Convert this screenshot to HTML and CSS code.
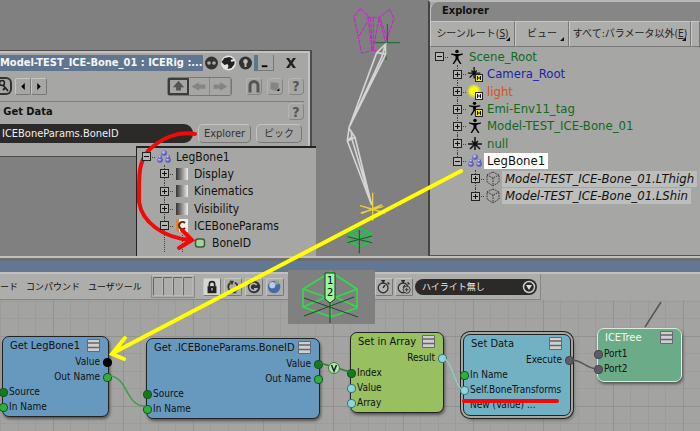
FILE: index.html
```html
<!DOCTYPE html>
<html lang="ja">
<head>
<meta charset="utf-8">
<title>ICE Tree</title>
<link rel="stylesheet" href="styles.css">
</head>
<body>
<svg class="defs" aria-hidden="true">
  <defs>
    <linearGradient id="fade"><stop offset="0" stop-color="#333"/><stop offset="1" stop-color="#eee"/></linearGradient>
    <radialGradient id="ball" cx=".4" cy=".35"><stop offset="0" stop-color="#d5d5ff"/><stop offset="1" stop-color="#5452b4"/></radialGradient>
    <radialGradient id="sun"><stop offset=".5" stop-color="#ff0"/><stop offset="1" stop-color="#ff0" stop-opacity=".1"/></radialGradient>
    <symbol id="i-model" viewBox="0 0 16 16"><circle cx="8" cy="2.500" r="1.800"/><path d="M2 4.500l4 .500h4l4-.500v1L9.500 7v3l3 5h-1.500L8 10.500 5 15H3.500l3-5V7L2 5.500z"/></symbol>
    <symbol id="i-null" viewBox="0 0 16 16"><path d="M8 1v13M1 8h14M3 13l5-5 5 5M5 5l3 3 3-3" fill="none" stroke="#111" stroke-width="1.500"/></symbol>
    <symbol id="i-tag" viewBox="0 0 8 8"><rect x=".5" y=".5" width="7" height="7" fill="currentColor" stroke="#222"/><path d="M2.500 2v4M5.500 2v4M2.500 4h3" stroke="#111" fill="none"/></symbol>
    <symbol id="i-cloud" viewBox="0 0 16 16"><g fill="url(#ball)"><circle cx="8" cy="4" r="2.800"/><circle cx="4" cy="11" r="2.800"/><circle cx="12" cy="11" r="2.800"/><circle cx="4" cy="8" r="2"/><circle cx="12" cy="8" r="2"/></g></symbol>
    <symbol id="i-cube" viewBox="0 0 16 16"><path d="M8 1l6 3v7l-6 4-6-4V4zM2 4l6 3 6-3M8 7v8" fill="none" stroke="#333" stroke-dasharray="1.500 1"/></symbol>
    <symbol id="i-prop" viewBox="0 0 16 16"><path fill="url(#fade)" d="M2 2h12v12H2z"/></symbol>
    <symbol id="i-custom" viewBox="0 0 16 16"><path fill="#f5ede6" d="M2 1h12v13H2z"/><path fill="#e0863c" d="M2 1h3v13H2z"/><path d="M11 5a3.500 3.500 0 1 0 0 5" fill="none" stroke="#5a2a10" stroke-width="2"/></symbol>
    <symbol id="i-param" viewBox="0 0 16 16"><rect x="3.500" y="4" width="9" height="8" rx="2.500" fill="#a9cfa0" stroke="#3c5c38" stroke-width="1.500"/></symbol>
    <symbol id="i-menu" viewBox="0 0 13 13"><path fill="#cfcfcf" stroke="#667" d="M.5.5h12v12H.5z"/><path stroke="#666" stroke-width="1.500" d="M1 4h11M1 8.500h11"/></symbol>
    <symbol id="i-watch" viewBox="0 0 18 18"><circle cx="8" cy="10" r="5.500" fill="#b5b5b3" stroke="#333" stroke-width="1.500"/><path d="M8 10l2-3M6 2h4M8 2v3M13 4l2 2" stroke="#222" stroke-width="1.500"/></symbol>
  </defs>
</svg>

<main class="desktop">
  <section class="scene">
    <div class="viewport">
      <svg class="rig" viewBox="0 0 390 780" aria-hidden="true">
        <g fill="none" stroke="#cf1dcf" stroke-width="3">
          <path d="M150 26l-18 24 23 110 35-10M150 26l32 28M238 28l14 27-24 70M238 28l-32 26M147 108l29-48M170 52h42M174 52l12 98M190 52v98M207 55l-18 92M182 54l4 94M207 55l20 72M190 150l20 8M212 58l20 62" stroke-dasharray="14 3"/>
        </g>
        <path d="M195 128h75M232 72v55M228 130v50" stroke="#146a28" stroke-width="3"/>
        <g fill="none" stroke="#d4d4d4" stroke-width="5">
          <path d="M227 132l-27 26-83 225 110-220zM227 132l-12 40-98 211M200 158l26 4M117 385l-5 38 73 192-50-203zM112 423l12-12 61 204M117 385l18 27-23 11M124 395l2 25"/>
        </g>
        <path d="M188 578v84M150 617l76 22M216 614l-60 26M152 639l68-20" stroke="#e6d23c" stroke-width="4"/>
        <path d="M118 700l32-16 34 16v24l-34 16-34-16zM118 700l34 18 32-18M130 690l40 40M172 690l-40 40" fill="none" stroke="#0bd33c" stroke-width="4"/>
        <path d="M148 690v70M112 710l74 18M186 708l-74 20" stroke="#125c24" stroke-width="3"/>
      </svg>

      <section class="ppg" aria-label="Get Data">
        <header class="ppg-title">
          <h1>Model-TEST_ICE-Bone_01 : ICERig :...</h1>
          <button class="round" aria-label="Focus"><svg viewBox="0 0 16 16"><circle cx="8" cy="8" r="6.500" fill="#333"/><circle cx="5.500" cy="8" r="1.800" fill="#aaa"/><circle cx="10.500" cy="8" r="1.800" fill="#aaa"/></svg></button>
          <button class="round" aria-label="Recycle"><svg viewBox="0 0 16 16"><circle cx="8" cy="8" r="7.500" fill="#e4e4e4"/><path d="M1 7l3-4 5-1 4 2-3 1 1 2 3-1v3l-3 4-4 1 1-3-1-2-3 1z" fill="#222"/></svg></button>
          <button class="round" aria-label="Lock"><svg viewBox="0 0 16 16"><circle cx="8" cy="8" r="6.500" fill="#333"/><path d="M8 4a2.500 2.500 0 0 1 1 4.700V12H7V8.700A2.500 2.500 0 0 1 8 4z" fill="#bbb"/></svg></button>
          <span class="strip"></span>
          <button class="flat" aria-label="Minimize"><svg viewBox="0 0 16 16"><path d="M4 11h6v2H4z"/></svg></button>
          <button class="flat close" aria-label="Close"><svg viewBox="0 0 16 16"><path d="M3 3h3l2 3 2-3h3L9.500 8 13 13h-3L8 10l-2 3H3l3.500-5z" fill="#222"/></svg></button>
        </header>
        <div class="ppg-tools">
          <button class="key" aria-label="Key"><svg viewBox="0 0 10 14"><circle cx="2" cy="4" r="2.500" fill="none" stroke="#222" stroke-width="1.500"/><path d="M3 6l5 6M5 9l-2 2" fill="none" stroke="#222" stroke-width="1.800"/></svg></button>
          <button class="tile" aria-label="Previous"><svg viewBox="0 0 16 16"><path d="M10 4v8L6 8z"/></svg></button>
          <button class="tile" aria-label="Next"><svg viewBox="0 0 16 16"><path d="M6 4v8l4-4z"/></svg></button>
          <div class="nav">
            <button class="on" aria-label="Up"><svg viewBox="0 0 16 16"><path d="M8 1l7 8h-4v4H5V9H1z" fill="#555"/></svg></button>
            <button aria-label="Back"><svg viewBox="0 0 16 16"><path d="M1 8l7-4v2h6v4H8v2z" fill="#858583"/></svg></button>
            <button aria-label="Forward"><svg viewBox="0 0 16 16"><path d="M15 8L8 4v2H2v4h6v2z" fill="#858583"/></svg></button>
          </div>
          <button class="tile soft" aria-label="Magnet"><svg viewBox="0 0 14 14"><path d="M3 13V6a4 4 0 0 1 8 0v7" fill="none" stroke="#555" stroke-width="3"/></svg></button>
          <button class="tile soft" aria-label="Preset"><svg viewBox="0 0 16 16"><path d="M3 3l9 1v7l-3 2-6-2z" fill="#858583"/><path d="M13 10v3h-3z"/></svg></button>
          <button class="tile soft help">?</button>
        </div>
        <div class="ppg-head"><h2>r Get Data</h2><button class="tile soft help">?</button></div>
        <div class="ppg-field">
          <input class="path" aria-label="Reference" value="ICEBoneParams.BoneID">
          <button class="push">Explorer</button>
          <button class="push">ピック</button>
        </div>
      </section>

      <section class="popup" aria-label="Parameters">
        <ul class="tree">
          <li class="root"><span class="twig"><button class="exp minus" aria-label="Collapse"></button></span><svg><use href="#i-cloud"/></svg><span class="name">LegBone1</span></li>
          <li class="d1"><span class="twig"><button class="exp plus" aria-label="Expand"></button></span><svg><use href="#i-prop"/></svg><span class="name">Display</span></li>
          <li class="d1"><span class="twig"><button class="exp plus" aria-label="Expand"></button></span><svg><use href="#i-prop"/></svg><span class="name">Kinematics</span></li>
          <li class="d1"><span class="twig"><button class="exp plus" aria-label="Expand"></button></span><svg><use href="#i-prop"/></svg><span class="name">Visibility</span></li>
          <li class="d1"><span class="twig"><button class="exp minus" aria-label="Collapse"></button></span><svg><use href="#i-custom"/></svg><span class="name">ICEBoneParams</span></li>
          <li class="d1"><span class="twig bare"></span><span class="twig bare"></span><svg><use href="#i-param"/></svg><span class="name">BoneID</span></li>
        </ul>
      </section>
    </div>

    <aside class="explorer">
      <h2>Explorer</h2>
      <div class="menus">
        <button class="m1">シーンルート(<u>S</u>)</button>
        <button class="m2">ビュー</button>
        <button class="m3">すべて:パラメータ以外(<u>E</u>)</button>
        <span class="m4"></span>
      </div>
      <ul class="tree">
        <li class="root green"><span class="twig"><button class="exp minus" aria-label="Collapse"></button></span><svg><use href="#i-model"/></svg><span class="name">Scene_Root</span></li>
        <li class="d1 blue"><span class="twig"><button class="exp plus" aria-label="Expand"></button></span><svg viewBox="0 0 18 18"><use href="#i-null" width="16" height="16"/><use href="#i-tag" x="9" y="9" width="9" height="9" color="#e8e81c"/></svg><span class="name">Camera_Root</span></li>
        <li class="d1 orange"><span class="twig"><button class="exp plus" aria-label="Expand"></button></span><svg viewBox="0 0 18 18"><circle cx="8" cy="8" r="8" fill="url(#sun)"/><use href="#i-tag" x="9" y="9" width="9" height="9" color="#eee"/></svg><span class="name">light</span></li>
        <li class="d1 green"><span class="twig"><button class="exp plus" aria-label="Expand"></button></span><svg viewBox="0 0 18 18"><use href="#i-model" width="17" height="17"/><use href="#i-tag" x="9" y="9" width="9" height="9" color="#e8e81c"/></svg><span class="name">Emi-Env11_tag</span></li>
        <li class="d1 green"><span class="twig"><button class="exp plus" aria-label="Expand"></button></span><svg><use href="#i-model"/></svg><span class="name">Model-TEST_ICE-Bone_01</span></li>
        <li class="d1 green"><span class="twig"><button class="exp plus" aria-label="Expand"></button></span><svg><use href="#i-null"/></svg><span class="name">null</span></li>
        <li class="d1 end"><span class="twig"><button class="exp minus" aria-label="Collapse"></button></span><svg><use href="#i-cloud"/></svg><span class="name picked">LegBone1</span></li>
        <li class="d2"><span class="twig"><button class="exp plus" aria-label="Expand"></button></span><svg><use href="#i-cube"/></svg><span class="name member">Model-TEST_ICE-Bone_01.LThigh</span></li>
        <li class="d2 end"><span class="twig"><button class="exp plus" aria-label="Expand"></button></span><svg><use href="#i-cube"/></svg><span class="name member">Model-TEST_ICE-Bone_01.LShin</span></li>
      </ul>
    </aside>
  </section>

  <section class="ice" aria-label="ICE Tree">
    <div class="ice-title"></div>
    <div class="ice-bar">
      <button class="menu">ード</button>
      <button class="menu">コンパウンド</button>
      <button class="menu">ユーザツール</button>
      <span class="slots"><i></i><i></i><i></i><i></i></span>
      <div class="tools">
        <button class="tile lit" aria-label="Lock"><svg viewBox="0 0 18 18"><path d="M4 8h10v8H4z" fill="#222"/><path d="M6 8V6a3 3 0 0 1 6 0v2" fill="none" stroke="#222" stroke-width="1.800"/><path d="M9 10v3" stroke="#ccc" stroke-width="1.500"/></svg></button>
        <button class="tile" aria-label="Refresh"><svg viewBox="0 0 18 18"><path d="M7 14a5.500 5.500 0 0 1-1-9.500M11 4a5.500 5.500 0 0 1 1 9.500" fill="none" stroke="#333" stroke-width="2"/><path d="M5 2h5L8 7zM13 16H8l2-5z" fill="#333"/></svg></button>
        <button class="tile" aria-label="Clear"><svg viewBox="0 0 18 18"><circle cx="9" cy="9" r="7" fill="#333"/><path d="M12 7a4 4 0 1 0 0 4H9" fill="none" stroke="#bbb" stroke-width="1.800"/></svg></button>
        <button class="tile" aria-label="View"><svg viewBox="0 0 18 18"><circle cx="8" cy="9" r="7" fill="#4769a6"/><circle cx="6" cy="7" r="3.500" fill="#b9cbe6"/><circle cx="11" cy="4" r="2.500" fill="#80ab80"/></svg></button>
      </div>
      <div class="timers">
        <button class="tile" aria-label="Timer"><svg viewBox="0 0 18 18"><use href="#i-watch"/></svg></button>
        <button class="tile" aria-label="Timer settings"><svg viewBox="0 0 18 18"><use href="#i-watch"/><circle cx="12" cy="12" r="4" fill="#aaa" stroke="#333"/><path d="M10 12h4M12 10v4" stroke="#333"/></svg></button>
        <span class="pick"><select aria-label="ハイライト"><option>ハイライト無し</option></select><svg viewBox="0 0 14 14"><circle cx="7" cy="7" r="5.500" fill="#292929" stroke="#ccc" stroke-width="1.500"/><path d="M4 5h6l-3 5z" fill="#ddd"/></svg></span>
      </div>
    </div>
    <div class="canvas">
      <article class="node n1"><header><h3>Get LegBone1</h3><button aria-label="Menu"><svg><use href="#i-menu"/></svg></button></header>
        <p class="out black">Value</p><p class="out">Out Name</p><p class="dark">Source</p><p>In Name</p></article>
      <article class="node n2"><header><h3>Get .ICEBoneParams.BoneID</h3><button aria-label="Menu"><svg><use href="#i-menu"/></svg></button></header>
        <p class="out dark">Value</p><p class="out">Out Name</p><p class="dark">Source</p><p>In Name</p></article>
      <article class="node n3"><header><h3>Set in Array</h3><button aria-label="Menu"><svg><use href="#i-menu"/></svg></button></header>
        <p class="out cyan">Result</p><p class="dark">Index</p><p class="cyan">Value</p><p class="cyan">Array</p></article>
      <article class="node n4"><header><h3>Set Data</h3><button aria-label="Menu"><svg><use href="#i-menu"/></svg></button></header>
        <p class="out grey">Execute</p><p>In Name</p><p class="cyan">Self.BoneTransforms</p><p class="cyan none">New (Value) ...</p></article>
      <article class="node n5"><header><h3>ICETree</h3><button aria-label="Menu"><svg><use href="#i-menu"/></svg></button></header>
        <p class="grey">Port1</p><p class="grey">Port2</p></article>
    </div>
  </section>

  <svg class="marks" aria-hidden="true">
    <g fill="none" stroke-width="1.500">
      <path d="M109 376c19 0 16 30 36 30" stroke="#3f9d4c"/>
      <path d="M320 363l14 4 16 5" stroke="#2f7d3a"/>
      <path d="M444 358c8 4 10 24 17 31" stroke="#8cc9bf"/>
      <path d="M571 360c12 0 14 8 26 9M661 302l-16 25" stroke="#555"/>
    </g>
    <circle cx="334" cy="368" r="5.500" fill="#b5e6a8" stroke="#3c7a40"/>
    <path d="M331.500 365l2.500 6 2.500-6" fill="none" stroke="#123" stroke-width="1.500"/>
    <g fill="none" stroke="#ff0" stroke-width="4" stroke-linecap="round"><path d="M461 171L113 353M125 338l-13 16 12 5"/></g>
    <g fill="none" stroke="#f00a0a" stroke-width="4" stroke-linecap="round"><path d="M195 134C178 131 161 138 148 151 138 164 139 176 139 202 142 222 163 238 191 240M182 230l10 10-13 8"/><path d="M464 401h93"/></g>
  </svg>

  <svg class="inset" viewBox="0 0 87 54" role="img" aria-label="12">
    <path fill="#808080" d="M0 0h87v54H0z"/>
    <path d="M15 19L43 2l26 17v19L43 47 15 37zM15 19l28 10 26-10M43 29v18M15 37l28-12 26 12M43 2v23" fill="none" stroke="#2be044" stroke-width="1.500"/>
    <path d="M16 28l54 19M66 27L16 46M42 30v23" stroke="#174f22"/>
    <path d="M37 3h10v26l-5 4-5-4z" fill="#9df59d" stroke="#143d16"/>
    <text x="39" y="14">1</text><text x="39" y="26">2</text>
  </svg>
</main>
</body>
</html>
```
FILE: styles.css
```css
* { box-sizing: border-box; }
body {
  margin: 0;
  background: #808080;
  color: #111;
  font: 12px/16px "DejaVu Sans Condensed", "Noto Sans CJK JP", sans-serif;
}
h1, h2, h3, p, ul { margin: 0; padding: 0; font-size: 12px; line-height: 16px; }
ul { list-style: none; }
button, input, select { font: inherit; color: inherit; margin: 0; padding: 0; border: 0; background: none; }
button svg { display: block; width: 100%; height: 100%; }
.defs { position: absolute; width: 0; height: 0; }

.desktop { position: relative; display: flex; flex-direction: column; min-height: 100vh; overflow: hidden; }
.scene { display: flex; height: 256px; }
.viewport { position: relative; flex: 1; }
.rig { position: absolute; left: 310px; top: 0; width: 130px; height: 260px; }

/* property page */
.ppg {
  position: absolute; left: 0; top: 50px; width: 312px;
  background: #a6a6a4; border: 2px solid #4c4c4c; border-width: 1px 2px 1px 0;
  box-shadow: inset -2px 2px #c2c2c0; padding: 3px 6px 13px 0;
}
.ppg-title { display: flex; align-items: center; height: 17px; }
.ppg-title h1 {
  flex: none; white-space: nowrap;
  background: #60758f; color: #f5f5f5; font: bold 11px/16px "DejaVu Sans Condensed", sans-serif;
}
.round { width: 17px; height: 16px; flex: none; }
.strip { width: 4px; height: 16px; background: #60758f; }
.flat { width: 16px; height: 16px; border: solid #777; border-width: 0 1px 1px 0; flex: none; }
.close { margin-left: 9px; border: 0; }
.ppg-tools { display: flex; align-items: center; height: 31px; border-bottom: 1px solid #7e7e7c; }
.tile {
  width: 16px; height: 17px; border: 1px solid; border-color: #c5c5c3 #777 #777 #c5c5c3;
  border-radius: 2px; color: #444; flex: none;
}
.soft { margin-left: 5px; border-color: #b5b5b3 #858583 #858583 #b5b5b3; border-radius: 4px; }
.help { font-weight: bold; font-size: 14px; line-height: 14px; color: #555; }
.key { width: 12px; height: 18px; margin-right: 3px; border: 2px solid #333; border-left: 0; border-radius: 0 6px 6px 0; }
.nav { display: flex; margin-left: auto; margin-right: 9px; border: 1px solid #777; border-radius: 3px; }
.nav button { width: 21px; height: 17px; border-right: 1px solid #8a8a88; }
.nav .on { border: 2px solid #3c3c3c; }
.ppg-head { display: flex; align-items: center; justify-content: space-between; height: 19px; }
.ppg-head h2 { margin-left: -5px; white-space: pre; font-size: 11px; }
.ppg-field { display: flex; gap: 5px; margin-top: 3px; padding-right: 2px; height: 19px; }
.path { flex: 1; min-width: 0; background: #2c2a28; color: #eee; border-radius: 0 9px 9px 0; padding: 0 2px; font-size: 11px; }
.push {
  width: 53px; border: 1px solid; border-color: #c5c5c3 #777 #777 #c5c5c3; border-radius: 5px; color: #333;
  font-size: 11px; line-height: 16px;
}
.push + .push { width: 46px; font-size: 10px; }

/* trees */
.tree { display: flex; flex-direction: column; }
.tree li { display: flex; align-items: center; flex: 1; white-space: nowrap; }
.tree svg { width: 18px; height: 16px; flex: none; color: #111; }
.tree .name { padding: 0 3px; }
.tree .d1 { padding-left: 18px; }
.tree .d2 { padding-left: 36px; }
.twig { position: relative; display: grid; place-items: center; width: 18px; align-self: stretch; flex: none; }
.twig::before { content: ""; position: absolute; left: 9px; top: 0; bottom: 0; border-left: 1px dotted #444; }
.twig::after { content: ""; position: absolute; left: 9px; right: 0; top: 50%; border-top: 1px dotted #444; }
.root .twig::before, .bare::after { display: none; }
.end .twig::before { bottom: 50%; }
.exp {
  position: relative; z-index: 1; width: 9px; height: 9px; border: 1px solid #222;
  background: linear-gradient(#111, #111) center / 5px 1px no-repeat #b4b4b2;
}
.plus {
  background: linear-gradient(#111, #111) center / 5px 1px no-repeat,
    linear-gradient(#111, #111) center / 1px 5px no-repeat #b4b4b2;
}
.green { color: #0f6a1c; }
.blue { color: #1f1fa6; }
.orange { color: #d8501c; }
.tree .picked { background: #fff; }
.tree .member { background: #bdbdbb; font-style: italic; }

.popup {
  position: absolute; left: 136px; top: 146px; width: 180px; height: 110px;
  background: #a6a6a4; border: solid #222; border-width: 2px 0 0 1px;
}
.popup .tree { height: 104px; }

.explorer {
  flex: 0 0 272px; min-width: 0; overflow: hidden; background: #a6a6a4;
  border-left: 2px solid #444; border-top: 2px solid #b8b8b6; border-bottom: 1px solid #555;
}
.explorer h2 {
  height: 19px; padding-left: 11px; background: #868686; border-left: 1px solid #c5c5c3;
  border-radius: 8px 0 0 0; font: bold 11px/18px "DejaVu Sans Condensed", sans-serif;
}
.menus { display: flex; height: 26px; margin-bottom: 1px; font-size: 10px; }
.menus > * {
  position: relative; flex: none; background: #adadab; color: #222; white-space: nowrap;
  border: 1px solid; border-color: #c8c8c6 #777 #777 #c8c8c6;
}
.menus button::after {
  content: ""; position: absolute; right: 4px; bottom: 5px;
  border: 2px solid transparent; border-right-color: #111; border-bottom-color: #111;
}
.m1 { width: 85px; }
.m2 { width: 54px; }
.m3 { width: 122px; }
.menus .m4 { flex: 1; }
.explorer .tree { height: 157px; font-size: 13px; }

/* ICE tree window */
.ice { flex: 1; display: flex; flex-direction: column; background: #a6a6a4; border-top: 2px solid #c0c0be; }
.ice-title { height: 16px; background: linear-gradient(#6e6e6e 3px, #63779a 3px, #64778f); border-bottom: 2px solid #c0c0be; }
.ice-bar { display: flex; align-items: center; width: 541px; height: 26px; border: solid #858583; border-width: 0 1px 1px 0; background: #adadab; }
.menu { margin-right: 8px; white-space: nowrap; font-size: 9px; }
.slots { display: flex; margin-left: auto; border: 1px solid #8a8a88; border-top-color: #c5c5c3; padding: 1px; }
.slots i { width: 10px; height: 19px; border: 1px solid; border-color: #666 #bbb #bbb #666; border-radius: 2px; }
.tools { display: flex; gap: 3px; width: 88px; flex: none; margin-left: 8px; }
.tools .tile, .timers .tile { width: 18px; height: 18px; }
.tools .lit { background: #d6d6d4; }
.timers { display: flex; gap: 2px; align-items: center; flex: none; margin-left: 84px; padding-right: 3px; }
.pick { position: relative; width: 122px; height: 16px; }
.pick select {
  appearance: none; display: block; width: 100%; height: 16px; padding: 0 18px 0 7px; border-radius: 8px;
  background: #2c2a28; color: #eee; font-size: 9px; line-height: 14px;
}
.pick svg { position: absolute; right: 1px; top: 1px; width: 14px; height: 14px; pointer-events: none; }
.canvas {
  flex: 1; min-height: 131px;
  background:
    linear-gradient(90deg, #929290 1px, transparent 1px) 53px 0 / 70px 70px,
    linear-gradient(#929290 1px, transparent 1px) 0 36px / 70px 70px,
    linear-gradient(90deg, #9c9c9a 1px, transparent 1px) 0 0 / 35px 35px,
    linear-gradient(90deg, #9c9c9a 1px, transparent 1px) 18px 0 / 35px 35px,
    linear-gradient(#9c9c9a 1px, transparent 1px) 0 1px / 35px 35px,
    linear-gradient(#9c9c9a 1px, transparent 1px) 0 18px / 35px 35px,
    #a3a3a1;
}

/* graph nodes */
.node {
  position: absolute; padding-bottom: 1px; border: 1px solid #222; border-radius: 7px;
  background: #6799bf; box-shadow: 1px 2px 3px #555; font-size: 10px;
}
.node header { display: flex; align-items: center; justify-content: space-between; height: 17px; padding: 0 8px 0 7px; }
.node h3 { font-weight: normal; font-size: 11px; white-space: nowrap; }
.node header button { width: 13px; height: 13px; }
.node header svg { width: 13px; height: 13px; }
.node p { position: relative; padding: 0 8px 0 6px; font-size: 10px; line-height: 15px; white-space: nowrap; }
.node .out { text-align: right; }
.node p::before {
  content: ""; position: absolute; left: -4px; top: 4px; width: 7px; height: 7px;
  border: 1px solid #1d4d2a; border-radius: 4px; background: #2fb03c;
}
.node .out::before { left: auto; right: -4px; }
.node .dark::before { background: #147a1c; }
.node .black::before { background: #000; border-color: #000; }
.node .cyan::before { background: #8fd6d8; border-color: #3c7078; }
.node .grey::before { background: #5c5c6c; border-color: #444; }
.node .none::before { display: none; }
.n1 { left: 2px; top: 336px; width: 107px; height: 81px; }
.n2 { left: 146px; top: 338px; width: 174px; height: 81px; }
.n3 { left: 350px; top: 332px; width: 94px; height: 81px; background: #98bf60; }
.n4 { left: 463px; top: 334px; width: 108px; height: 82px; background: #72b1c4; box-shadow: 0 0 0 2px #a5a5a3, 0 0 0 3px #222, 2px 3px 4px #444; }
.n5 { left: 597px; top: 328px; width: 85px; height: 54px; background: #6bab88; border-color: #dceadc; }
.n5 h3 { color: #f3f8f3; }

.marks { position: absolute; left: 0; top: 0; width: 100%; height: 100%; pointer-events: none; }
.inset { position: absolute; left: 288px; top: 270px; width: 87px; height: 54px; font: 11px "DejaVu Sans Condensed", sans-serif; }
```
